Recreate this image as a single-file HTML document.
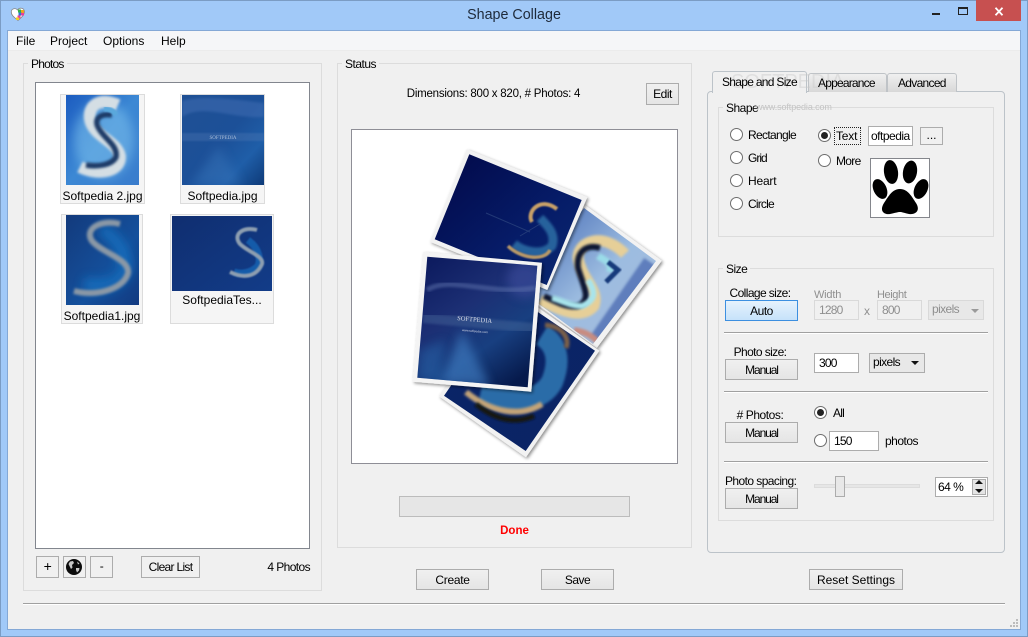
<!DOCTYPE html>
<html><head><meta charset="utf-8"><title>Shape Collage</title>
<style>
html,body{margin:0;padding:0;width:1028px;height:637px;overflow:hidden;background:#a1c9f8}
*{box-sizing:border-box}
body{font-family:"Liberation Sans",sans-serif;font-size:12px;color:#000;position:relative;letter-spacing:-.5px}
.a{position:absolute}
.t{position:absolute;white-space:nowrap;line-height:14px}
.c{text-align:center}
.g{position:absolute;border:1px solid #dcdcdc}
.lg{position:absolute;background:#f0f0f0;padding:0 3px;line-height:13px;height:13px;white-space:nowrap}
.b{position:absolute;border:1px solid #acacac;background:linear-gradient(#f0f0f0,#e5e5e5);text-align:center;white-space:nowrap}
.m{letter-spacing:-1.1px}
.i{position:absolute;background:#fff;border:1px solid #acacac;line-height:18px;padding-left:4px;white-space:nowrap;overflow:hidden}
.n{letter-spacing:-.8px}
.d{background:#f0f0f0;border-color:#d9d9d9;color:#8f8f8f}
.r{position:absolute;width:13px;height:13px;border-radius:50%;border:1px solid #6d6d6d;background:#fff}
.r.on:after{content:"";position:absolute;left:2px;top:2px;width:7px;height:7px;border-radius:50%;background:#222}
.s{position:absolute;height:1px;background:#a0a0a0;box-shadow:0 1px 0 #fff}
.th{position:absolute;background:#f5f5f5;border:1px solid #dcdcdc;letter-spacing:0}
.th svg{position:absolute;display:block}
.th span{position:absolute;left:0;right:0;text-align:center;white-space:nowrap;line-height:14px}
.mn{letter-spacing:0}
</style></head><body>
<svg width="0" height="0" style="position:absolute"><defs>
<filter id="bl" x="-30%" y="-30%" width="160%" height="160%"><feGaussianBlur stdDeviation="1.4"/></filter>
<filter id="bl2" x="-30%" y="-30%" width="160%" height="160%"><feGaussianBlur stdDeviation="0.8"/></filter>
<filter id="bl5" x="-40%" y="-40%" width="180%" height="180%"><feGaussianBlur stdDeviation="5"/></filter>
<filter id="sh" x="-10%" y="-10%" width="125%" height="125%"><feDropShadow dx="1.5" dy="1.5" stdDeviation="1.5" flood-color="#000" flood-opacity=".45"/></filter>
<linearGradient id="g1" x1="0" y1="0" x2="1" y2="1"><stop offset="0" stop-color="#1c5cc0"/><stop offset=".5" stop-color="#3c88d4"/><stop offset="1" stop-color="#3a7ccc"/></linearGradient>
<linearGradient id="g2" x1="0" y1="0" x2="1" y2="1"><stop offset="0" stop-color="#1f5094"/><stop offset=".5" stop-color="#1c5098"/><stop offset=".75" stop-color="#1f5ea8"/><stop offset="1" stop-color="#0e3a78"/></linearGradient>
<linearGradient id="g3" x1="0" y1="0" x2="1" y2="1"><stop offset="0" stop-color="#133a7c"/><stop offset=".6" stop-color="#14509c"/><stop offset="1" stop-color="#123a80"/></linearGradient>
<linearGradient id="g4" x1="0" y1="0" x2="1" y2="1"><stop offset="0" stop-color="#102e70"/><stop offset="1" stop-color="#123c88"/></linearGradient>
<linearGradient id="ca" x1="0" y1="0" x2="1" y2="1"><stop offset="0" stop-color="#020848"/><stop offset=".6" stop-color="#061c68"/><stop offset="1" stop-color="#0a2870"/></linearGradient>
<linearGradient id="cb" x1="0" y1="0" x2="1" y2="1"><stop offset="0" stop-color="#3a60b0"/><stop offset=".55" stop-color="#9cbce0"/><stop offset="1" stop-color="#a8bcdc"/></linearGradient>
<linearGradient id="cc" x1="0" y1="0" x2="1" y2="1"><stop offset="0" stop-color="#0a2468"/><stop offset="1" stop-color="#0b2464"/></linearGradient>
<linearGradient id="cd" x1=".1" y1="0" x2=".75" y2="1"><stop offset="0" stop-color="#0c1a5e"/><stop offset=".4" stop-color="#1c2f74"/><stop offset=".7" stop-color="#183f80"/><stop offset="1" stop-color="#061a4c"/></linearGradient>
<clipPath id="pa"><polygon points="469.3,154.3 581.7,200 546.7,285 434.7,239.3"/></clipPath>
<clipPath id="pb"><polygon points="584,208 656,261 593,344 520,290"/></clipPath>
<clipPath id="pc"><polygon points="513.3,295.4 595,350.7 525.7,451 444,395.7"/></clipPath>
<clipPath id="pd"><polygon points="427.3,256.7 537.3,265.7 527.7,387.3 417.3,377.7"/></clipPath>
</defs></svg>

<!-- window frame -->
<div class="a" style="left:0;top:0;width:1028px;height:637px;border:1px solid #7b9cc4"></div>
<svg class="a" style="left:10px;top:6px" width="16" height="16" viewBox="0 0 16 16"><path d="M8 14.5C3 10.5 1 8.5 1.3 5.5 1.6 2.8 5.5 1.5 7.5 4 9.5 1 14 2 14.4 5.3 14.7 8.5 12 11 8 14.5Z" fill="#fff" stroke="#888" stroke-width=".8"/><rect x="8" y="3.5" width="3" height="3" fill="#35b24a"/><rect x="11" y="4" width="3" height="3" fill="#f0a020"/><rect x="8.5" y="6.5" width="3" height="3" fill="#2c7ad0"/><rect x="11" y="7" width="3" height="2.5" fill="#e83ca0"/><rect x="7.5" y="9.5" width="3" height="3" fill="#f04090"/><rect x="6" y="11.5" width="3" height="2.5" fill="#f0d020"/></svg>
<div class="t c" style="left:414px;top:6px;width:200px;font-size:14.3px;line-height:18px;color:#1e2a3a;letter-spacing:0">Shape Collage</div>
<div class="a" style="left:932px;top:13px;width:8px;height:2px;background:#222"></div>
<div class="a" style="left:958px;top:7px;width:10px;height:8px;border:1px solid #222;border-top-width:2px"></div>
<div class="a" style="left:976px;top:0;width:45px;height:21px;background:#c75050"></div>
<svg class="a" style="left:994px;top:7px" width="10" height="9" viewBox="0 0 10 9"><path d="M1.5 .8L8.5 8.2M8.5 .8L1.5 8.2" stroke="#fff" stroke-width="1.8"/></svg>

<!-- client -->
<div class="a" style="left:7px;top:30px;width:1014px;height:600px;background:#f0f0f0;border:1px solid #84a8d6"></div>
<div class="a" style="left:8px;top:31px;width:1012px;height:20px;background:#f5f6f8;border-bottom:1px solid #ebebeb"></div>
<div class="t mn" style="left:16px;top:34px">File</div>
<div class="t mn" style="left:50px;top:34px">Project</div>
<div class="t mn" style="left:103px;top:34px">Options</div>
<div class="t mn" style="left:161px;top:34px">Help</div>

<!-- Photos -->
<div class="g" style="left:23px;top:63px;width:299px;height:528px"></div>
<div class="lg" style="left:28px;top:58px;letter-spacing:-.8px">Photos</div>
<div class="a" style="left:35px;top:82px;width:275px;height:467px;background:#fff;border:1px solid #82868e"></div>

<div class="th" style="left:60px;top:94px;width:85px;height:110px">
<svg style="left:5px;top:0" width="73" height="90" viewBox="0 0 73 90"><rect width="73" height="90" fill="url(#g1)"/><ellipse cx="38" cy="45" rx="30" ry="38" fill="#7cc0ec" opacity=".55" filter="url(#bl5)"/><path d="M52 10C34 2 22 10 24 24 27 42 52 46 54 62 54 78 30 80 14 72" fill="none" stroke="#d4dee4" stroke-width="12" filter="url(#bl)"/><path d="M46 20C34 18 28 24 32 32 38 44 52 50 50 62 46 70 32 72 20 70" fill="none" stroke="#1a3a68" stroke-width="5.5" filter="url(#bl)"/><path d="M38 14C44 14 48 16 50 20" fill="none" stroke="#5aa8dc" stroke-width="5" filter="url(#bl2)"/></svg>
<span style="top:94px">Softpedia 2.jpg</span></div>

<div class="th" style="left:180px;top:94px;width:85px;height:110px">
<svg style="left:1px;top:0" width="82" height="90" viewBox="0 0 82 90"><rect width="82" height="90" fill="url(#g2)"/><path d="M0 22C20 8 50 24 82 22L82 8C50 4 20 0 0 6Z" fill="#4672b8" opacity=".45" filter="url(#bl)"/><path d="M10 90L36 50 60 90Z" fill="#3c78bc" opacity=".4" filter="url(#bl5)"/><rect x="0" y="38" width="82" height="8" fill="#5a80b8" opacity=".3" filter="url(#bl2)"/><text x="41" y="44" font-size="5" font-family="Liberation Serif" fill="#a8bcd8" text-anchor="middle" letter-spacing="0">SOFTPEDIA</text></svg>
<span style="top:94px">Softpedia.jpg</span></div>

<div class="th" style="left:61px;top:214px;width:82px;height:110px">
<svg style="left:4px;top:0" width="73" height="90" viewBox="0 0 73 90"><rect width="73" height="90" fill="url(#g3)"/><path d="M34 14C44 18 58 30 60 52 54 70 34 74 18 68" fill="none" stroke="#1878c8" stroke-width="13" opacity=".7" filter="url(#bl5)"/><path d="M54 9C34 4 18 14 26 26 36 38 64 44 62 58 58 74 30 82 8 76" fill="none" stroke="#8a98a6" stroke-width="6" filter="url(#bl)"/></svg>
<span style="top:94px">Softpedia1.jpg</span></div>

<div class="th" style="left:170px;top:214px;width:104px;height:110px">
<svg style="left:1px;top:1px" width="100" height="75" viewBox="0 0 100 75"><rect width="100" height="75" fill="url(#g4)"/><path d="M76 24C84 30 90 40 86 50 78 58 68 58 62 56" fill="none" stroke="#1868b8" stroke-width="7" opacity=".75" filter="url(#bl2)"/><path d="M85 14C72 10 60 18 68 28 76 36 92 40 90 48 84 62 70 62 58 56" fill="none" stroke="#8d9eb0" stroke-width="4" filter="url(#bl2)"/></svg>
<span style="top:78px">SoftpediaTes...</span></div>

<div class="b" style="left:36px;top:556px;width:23px;height:22px;background:#f0f0f0;line-height:19px;font-size:14px">+</div>
<div class="b" style="left:63px;top:556px;width:23px;height:22px;background:#f0f0f0"></div>
<svg class="a" style="left:65px;top:558px" width="18" height="18" viewBox="0 0 18 18"><circle cx="9" cy="9" r="8" fill="#0c0c0c"/><path d="M5 3.5L8 3 9 5 7 7 7.5 9.5 6 11 4.5 8 3.5 6Z M11 10L14.5 10 14 12.5 12 14.5 11 12Z M12 3.5L14.5 5.5 13 6.5Z" fill="#c8c8c8"/></svg>
<div class="b" style="left:90px;top:556px;width:23px;height:22px;background:#f0f0f0;line-height:19px">-</div>
<div class="b" style="left:141px;top:556px;width:59px;height:22px;background:#f0f0f0;line-height:20px;letter-spacing:-.7px">Clear List</div>
<div class="t" style="left:250px;top:560px;width:60px;text-align:right;letter-spacing:-.6px">4 Photos</div>

<!-- Status -->
<div class="g" style="left:337px;top:63px;width:355px;height:485px"></div>
<div class="lg" style="left:342px;top:58px">Status</div>
<div class="t c" style="left:381px;top:87px;width:225px;font-size:11.5px;letter-spacing:-.24px">Dimensions: 800 x 820, # Photos: 4</div>
<div class="b" style="left:646px;top:83px;width:33px;height:22px;line-height:20px">Edit</div>
<div class="a" style="left:351px;top:129px;width:327px;height:335px;background:#fff;border:1px solid #8e8e96"></div>

<svg class="a" style="left:351px;top:129px;letter-spacing:0" width="327" height="335" viewBox="351 129 327 335">
<!-- photo B S -->
<g filter="url(#sh)"><polygon points="580.7,202 661.7,260.7 596.7,348 515.7,289" fill="#f2f2f2"/></g>
<polygon points="584,208 656,261 593,344 520,290" fill="url(#cb)"/>
<g clip-path="url(#pb)">
<path d="M650 262L596 340" stroke="#2a4ca0" stroke-width="14" opacity=".55" filter="url(#bl)"/>
<path d="M625 254C604 232 578 240 578 258 582 280 600 290 594 306 584 318 566 314 540 300" fill="none" stroke="#e6cf98" stroke-width="11" filter="url(#bl)"/>
<path d="M600 248C586 244 576 252 578 268 584 288 592 300 578 306 568 308 556 302 544 296" fill="none" stroke="#0c1830" stroke-width="6" filter="url(#bl)"/>
<path d="M598 256C604 260 612 262 610 272" fill="none" stroke="#9adce8" stroke-width="7" filter="url(#bl)"/>
<path d="M608 262L618 270 606 282" fill="none" stroke="#143a7c" stroke-width="5" filter="url(#bl2)"/>
<path d="M588 280C596 292 596 300 582 306 570 306 560 300 552 298" fill="none" stroke="#a8e4ec" stroke-width="6" filter="url(#bl)"/>
<path d="M574 330C586 332 592 336 598 342" fill="none" stroke="#c88c80" stroke-width="6" filter="url(#bl)"/>
</g>
<!-- photo C bottom -->
<g filter="url(#sh)"><polygon points="512,289.4 599.3,350.7 526,457.3 438.7,396" fill="#f2f2f2"/></g>
<polygon points="513.3,295.4 595,350.7 525.7,451 444,395.7" fill="url(#cc)"/>
<g clip-path="url(#pc)">
<path d="M542 335C558 345 560 362 552 382 542 400 520 404 480 395" fill="none" stroke="#2a6ca8" stroke-width="22" filter="url(#bl)"/>
<path d="M545 325C562 326 570 338 566 348" fill="none" stroke="#7a6048" stroke-width="5" filter="url(#bl)"/>
<path d="M466 392C490 412 520 418 542 404" fill="none" stroke="#c4a478" stroke-width="6" filter="url(#bl)"/>
<path d="M476 404C495 420 515 424 534 416" fill="none" stroke="#181408" stroke-width="5" filter="url(#bl)"/>
</g>
<!-- photo A top -->
<g filter="url(#sh)"><polygon points="466.7,149.3 587.3,197.3 547.3,290 430,241.7" fill="#f2f2f2"/></g>
<polygon points="469.3,154.3 581.7,200 546.7,285 434.7,239.3" fill="url(#ca)"/>
<g clip-path="url(#pa)">
<path d="M540 218C548 226 556 234 552 246 542 256 524 252 514 244" fill="none" stroke="#26629c" stroke-width="9" filter="url(#bl)"/>
<path d="M557 209C540 196 526 212 532 222" fill="none" stroke="#c8a068" stroke-width="4" filter="url(#bl2)"/>
<path d="M508 246C520 258 544 262 550 250" fill="none" stroke="#b89868" stroke-width="3.5" filter="url(#bl2)"/>
<path d="M486 213L530 232M520 236L540 224" stroke="#304880" stroke-width="1" opacity=".7"/>
</g>
<!-- photo D front -->
<g filter="url(#sh)"><polygon points="423.3,252 542,262.7 531.3,391.7 412.7,381.7" fill="#f4f4f4"/></g>
<polygon points="427.3,256.7 537.3,265.7 527.7,387.3 417.3,377.7" fill="url(#cd)"/>
<g clip-path="url(#pd)">
<ellipse cx="525" cy="280" rx="18" ry="18" fill="#3a4a98" opacity=".7" filter="url(#bl5)"/>
<path d="M427 290C450 275 490 296 535 288" fill="none" stroke="#5a6ea8" stroke-width="5" opacity=".55" filter="url(#bl)"/>
<path d="M423 318L533 328" stroke="#5070a0" stroke-width="10" opacity=".4" filter="url(#bl)"/>
<path d="M440 384L462 330 490 386Z" fill="#3d78bc" opacity=".7" filter="url(#bl5)"/>
<path d="M420 350L445 340 440 382 418 378Z" fill="#2c6cb0" opacity=".45" filter="url(#bl5)"/>
</g>
<text transform="translate(457,320) rotate(5)" font-family="Liberation Serif" font-size="6.5" fill="#d8dce8">SOFTPEDIA</text>
<text transform="translate(462,331) rotate(5)" font-family="Liberation Sans" font-size="3" fill="#d8dce8">www.softpedia.com</text>
</svg>

<div class="a" style="left:399px;top:496px;width:231px;height:21px;background:#e6e6e6;border:1px solid #bcbcbc"></div>
<div class="t c" style="left:399px;top:524px;width:231px;color:#f00;font-weight:bold;font-size:11.5px;letter-spacing:0">Done</div>

<!-- Tabs -->
<div class="a" style="left:707px;top:91px;width:298px;height:462px;border:1px solid #bcc3c9;border-radius:4px;background:#f0f0f0"></div>
<div class="a" style="left:808px;top:73px;width:79px;height:19px;border:1px solid #bfc3c7;border-bottom:0;border-radius:3px 3px 0 0;background:linear-gradient(#f0f0f0,#d8d8d8)"></div>
<div class="a" style="left:887px;top:73px;width:70px;height:19px;border:1px solid #bfc3c7;border-bottom:0;border-radius:3px 3px 0 0;background:linear-gradient(#f0f0f0,#d8d8d8)"></div>
<div class="a" style="left:712px;top:71px;width:95px;height:22px;border:1px solid #bcc3c9;border-bottom:0;border-radius:3px 3px 0 0;background:#f0f0f0"></div>
<div class="t" style="left:731px;top:71px;font-size:20px;line-height:22px;color:#c8c8c8;opacity:.4;letter-spacing:0">SOFTPEDIA</div>
<div class="t" style="left:722px;top:75px;letter-spacing:-.7px">Shape and Size</div>
<div class="t" style="left:818px;top:76px;letter-spacing:-.8px">Appearance</div>
<div class="t" style="left:898px;top:76px;letter-spacing:-.7px">Advanced</div>

<!-- Shape -->
<div class="g" style="left:718px;top:107px;width:276px;height:130px"></div>
<div class="lg" style="left:723px;top:102px;letter-spacing:-.5px">Shape</div>
<div class="t" style="left:756px;top:100px;color:#c4c4c4;font-size:9px;letter-spacing:-.1px">www.softpedia.com</div>
<div class="r" style="left:730px;top:128px"></div><div class="t" style="left:748px;top:128px;letter-spacing:-.67px">Rectangle</div>
<div class="r" style="left:730px;top:151px"></div><div class="t" style="left:748px;top:151px;letter-spacing:-1px">Grid</div>
<div class="r" style="left:730px;top:174px"></div><div class="t" style="left:748px;top:174px;letter-spacing:-.2px">Heart</div>
<div class="r" style="left:730px;top:197px"></div><div class="t" style="left:748px;top:197px;letter-spacing:-.8px">Circle</div>
<div class="r on" style="left:818px;top:129px"></div>
<div class="a" style="left:834px;top:127px;width:27px;height:18px;border:1px dotted #222"></div>
<div class="t" style="left:836px;top:129px;letter-spacing:-.2px">Text</div>
<div class="r" style="left:818px;top:154px"></div><div class="t" style="left:836px;top:154px;letter-spacing:-.7px">More</div>
<div class="i" style="left:868px;top:126px;width:45px;height:20px;padding-left:2px">oftpedia</div>
<div class="b" style="left:920px;top:127px;width:23px;height:18px;background:#f0f0f0;line-height:14px;letter-spacing:0">...</div>
<div class="a" style="left:870px;top:158px;width:60px;height:60px;background:#fff;border:1px solid #84868c"></div>
<svg class="a" style="left:871px;top:159px" width="58" height="58" viewBox="0 0 58 58"><ellipse cx="20" cy="13" rx="7" ry="12" transform="rotate(-8 20 13)"/><ellipse cx="39" cy="13" rx="7" ry="11.5" transform="rotate(10 39 13)"/><ellipse cx="9" cy="30" rx="6.5" ry="10.5" transform="rotate(-25 9 30)"/><ellipse cx="50" cy="30" rx="6.5" ry="10.5" transform="rotate(25 50 30)"/><path d="M29 30C37 30 41 38 45 44 50 52 44 56 38 55 33 54 31 53 29 53 27 53 24 54 19 55 13 56 8 52 13 44 17 38 21 30 29 30Z"/></svg>

<!-- Size -->
<div class="g" style="left:718px;top:268px;width:276px;height:253px"></div>
<div class="lg" style="left:723px;top:263px">Size</div>

<div class="t c" style="left:725px;top:286px;width:70px;letter-spacing:-.6px">Collage size:</div>
<div class="b" style="left:725px;top:300px;width:73px;height:21px;line-height:20px;border-color:#3c8fe0;background:linear-gradient(#e6f2fc,#c6e2fa)">Auto</div>
<div class="t" style="left:814px;top:288px;color:#8f8f8f;font-size:11px;letter-spacing:-.2px">Width</div>
<div class="t" style="left:877px;top:288px;color:#8f8f8f;font-size:11px;letter-spacing:-.4px">Height</div>
<div class="i d n" style="left:814px;top:300px;width:45px;height:20px">1280</div>
<div class="t" style="left:864px;top:304px;color:#8f8f8f">x</div>
<div class="i d n" style="left:877px;top:300px;width:45px;height:20px">800</div>
<div class="i d" style="left:928px;top:300px;width:56px;height:20px;padding-left:3px;line-height:17px;background:#e8e8e8;letter-spacing:-.6px">pixels</div>
<div class="a" style="left:971px;top:309px;border:4px solid transparent;border-top:4px solid #9a9a9a"></div>
<div class="s" style="left:724px;top:332px;width:264px"></div>

<div class="t c" style="left:725px;top:345px;width:70px;letter-spacing:-.6px">Photo size:</div>
<div class="b m" style="left:725px;top:359px;width:73px;height:21px;line-height:20px">Manual</div>
<div class="i n" style="left:814px;top:353px;width:45px;height:20px">300</div>
<div class="i" style="left:869px;top:353px;width:56px;height:20px;background:#e8e8e8;padding-left:3px;line-height:17px;letter-spacing:-.6px">pixels</div>
<div class="a" style="left:911px;top:361px;border:4px solid transparent;border-top:4px solid #111"></div>
<div class="s" style="left:724px;top:391px;width:264px"></div>

<div class="t c" style="left:725px;top:408px;width:70px;letter-spacing:-.45px">&#35; Photos:</div>
<div class="b m" style="left:725px;top:422px;width:73px;height:21px;line-height:20px">Manual</div>
<div class="r on" style="left:814px;top:406px"></div><div class="t" style="left:833px;top:406px;letter-spacing:-.8px">All</div>
<div class="r" style="left:814px;top:434px"></div>
<div class="i n" style="left:829px;top:431px;width:50px;height:20px">150</div>
<div class="t" style="left:885px;top:434px">photos</div>
<div class="s" style="left:724px;top:461px;width:264px"></div>

<div class="t" style="left:725px;top:474px;letter-spacing:-.57px">Photo spacing:</div>
<div class="b m" style="left:725px;top:488px;width:73px;height:21px;line-height:20px">Manual</div>
<div class="a" style="left:814px;top:484px;width:106px;height:4px;background:#e6e6e6;border:1px solid #dcdcdc"></div>
<div class="a" style="left:835px;top:476px;width:10px;height:21px;background:#e8e8e8;border:1px solid #acacac"></div>
<div class="i" style="left:935px;top:477px;width:53px;height:20px;padding-left:2px">64 %</div>
<div class="a" style="left:972px;top:479px;width:14px;height:16px;background:#e4e4e4;border:1px solid #acacac"></div>
<div class="a" style="left:975px;top:480px;border:4px solid transparent;border-top:0;border-bottom:4px solid #111"></div>
<div class="a" style="left:975px;top:489px;border:4px solid transparent;border-bottom:0;border-top:4px solid #111"></div>

<!-- bottom -->
<div class="b" style="left:416px;top:569px;width:73px;height:21px;line-height:20px;letter-spacing:-.3px">Create</div>
<div class="b" style="left:541px;top:569px;width:73px;height:21px;line-height:20px">Save</div>
<div class="b" style="left:809px;top:569px;width:94px;height:21px;line-height:20px;letter-spacing:0">Reset Settings</div>
<div class="s" style="left:23px;top:603px;width:982px"></div>
<svg class="a" style="left:1009px;top:619px" width="10" height="10"><path d="M7 0h2v2h-2zM4 3h2v2h-2zM7 3h2v2h-2zM1 6h2v2h-2zM4 6h2v2h-2zM7 6h2v2h-2z" fill="#bcbcbc"/></svg>
</body></html>
